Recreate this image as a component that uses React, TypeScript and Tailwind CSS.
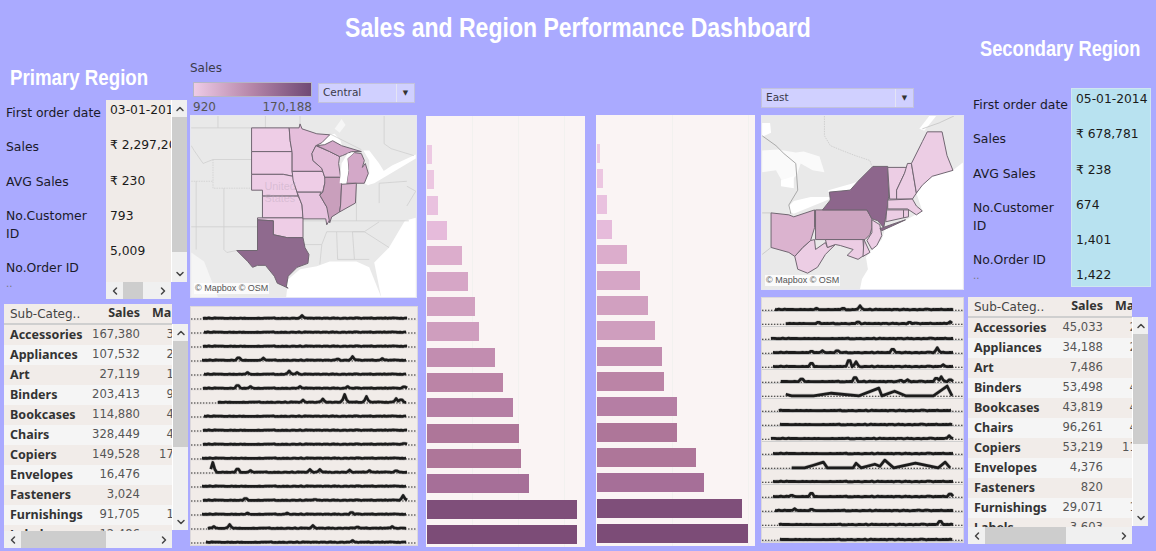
import { ChevronDown, ChevronLeft, ChevronRight, ChevronUp } from "lucide-react";

type SparkRow = { from: number; to: number; peaks?: number[][]; line?: number[][] };
type Row = { name: string; sales: string; margin: string };

const BAR_COLORS = ["#edc9e3", "#ecc6e1", "#e9c1df", "#e6bbdb", "#dcadcc", "#d6a6c6", "#d1a0c0", "#cf9ebe", "#c28db0", "#bb84a6", "#b57ea4", "#ae7699", "#ae7699", "#a66f98", "#7f4f7a", "#7c4c77"];
const BARS_CENTRAL = [5, 7, 11, 20, 35, 41, 48, 52, 68, 76, 86, 92, 94, 102, 150, 150];
const BARS_EAST = [3, 6, 10, 15, 30, 43, 51, 58, 65, 67, 80, 80, 99, 107, 145, 151];

const CENTRAL_ROWS: Row[] = [
  { name: "Accessories", sales: "167,380", margin: "36,154" },
  { name: "Appliances", sales: "107,532", margin: "22,105" },
  { name: "Art", sales: "27,119", margin: "13,206" },
  { name: "Binders", sales: "203,413", margin: "91,290" },
  { name: "Bookcases", sales: "114,880", margin: "42,100" },
  { name: "Chairs", sales: "328,449", margin: "46,120" },
  { name: "Copiers", sales: "149,528", margin: "171,560" },
  { name: "Envelopes", sales: "16,476", margin: "6,964" },
  { name: "Fasteners", sales: "3,024", margin: "949" },
  { name: "Furnishings", sales: "91,705", margin: "13,059" },
  { name: "Labels", sales: "12,486", margin: "5,546" },
];

const EAST_ROWS: Row[] = [
  { name: "Accessories", sales: "45,033", margin: "21,520" },
  { name: "Appliances", sales: "34,188", margin: "28,104" },
  { name: "Art", sales: "7,486", margin: "1,059" },
  { name: "Binders", sales: "53,498", margin: "41,220" },
  { name: "Bookcases", sales: "43,819", margin: "41,330" },
  { name: "Chairs", sales: "96,261", margin: "42,610" },
  { name: "Copiers", sales: "53,219", margin: "113,400" },
  { name: "Envelopes", sales: "4,376", margin: "1,812" },
  { name: "Fasteners", sales: "820", margin: "263" },
  { name: "Furnishings", sales: "29,071", margin: "15,069" },
  { name: "Labels", sales: "3,603", margin: "1,129" },
];

const SPARK_CENTRAL: SparkRow[] = [
  { from: 12, to: 218, peaks: [[112, 3]] },
  { from: 13, to: 218 },
  { from: 12, to: 218 },
  { from: 11, to: 218, peaks: [[48, 4], [73, 2.5], [148, 2], [163, 4], [193, 2]] },
  { from: 13, to: 218, peaks: [[57, 2], [99, 3.5], [107, 2]] },
  { from: 12, to: 218, peaks: [[47, 4.5], [60, 2], [110, 2], [158, 2], [215, 2.5]] },
  { from: 27, to: 218, peaks: [[113, 2.5], [133, 3.5], [155, 8], [177, 6], [207, 4], [212, 4]] },
  { from: 13, to: 217 },
  { from: 12, to: 218 },
  { from: 12, to: 218, peaks: [[215, 1.5]] },
  { from: 11, to: 218 },
  { from: 20, to: 218, peaks: [[22, 10], [47, 5], [60, 2], [120, 3], [130, 3], [160, 2.5], [180, 2], [207, 2.5]] },
  { from: 11, to: 218 },
  { from: 12, to: 218, peaks: [[55, 3], [125, 1.5], [214, 5]] },
  { from: 11, to: 218, peaks: [[57, 1.5], [97, 1.5], [162, 3]] },
  { from: 17, to: 218, peaks: [[23, 2], [39, 4], [123, 3], [168, 2], [203, 2]] },
  { from: 15, to: 218, peaks: [[163, 2]] },
];

const SPARK_EAST: SparkRow[] = [
  { from: 13, to: 193, peaks: [[55, 1.5], [82, 2], [99, 4]] },
  { from: 24, to: 193, peaks: [[57, 2], [97, 2.5], [149, 2], [190, 2]] },
  { from: 9, to: 193 },
  { from: 11, to: 193, peaks: [[50, 2], [61, 2], [76, 3], [132, 5], [177, 5]] },
  { from: 11, to: 193, peaks: [[50, 5], [88, 9], [95, 5], [183, 2]] },
  { from: 19, to: 193, peaks: [[40, 4], [94, 6], [140, 2], [147, 2], [176, 5], [181, 5], [190, 3]] },
  { from: 24, to: 192, line: [[24, 9], [30, 10.5], [52, 10.5], [70, 8], [98, 10.5], [118, 3], [121, 10.5], [134, 6], [145, 10.5], [173, 10.5], [187, 1], [192, 10.5]] },
  { from: 17, to: 192 },
  { from: 18, to: 193 },
  { from: 9, to: 193, peaks: [[189, 3]] },
  { from: 11, to: 193 },
  { from: 30, to: 188, line: [[30, 10.5], [43, 10.5], [52, 8], [62, 5], [66, 10.5], [92, 10.5], [95, 6], [100, 10.5], [114, 7], [119, 9], [124, 3], [133, 10.5], [155, 6], [178, 10.5], [185, 5], [190, 10.5]] },
  { from: 11, to: 193 },
  { from: 11, to: 193, peaks: [[30, 2], [50, 5], [190, 4]] },
  { from: 13, to: 193, peaks: [[33, 2], [50, 2], [158, 1]] },
  { from: 17, to: 193, peaks: [[180, 5]] },
  { from: 18, to: 193 },
];

// same wobble on every render
function wobble(i: number) {
  const v = Math.sin(i * 12.9898) * 43758.5453;
  return v - Math.floor(v);
}

function sparkPath(row: SparkRow, base: number) {
  if (row.line) return row.line.map((p, i) => `${i ? "L" : "M"}${p[0]} ${p[1]}`).join(" ");
  const pts: string[] = [];
  for (let x = row.from; x <= row.to; x += 2) {
    let lift = wobble(x + row.from) * 0.6;
    for (const [px, h] of row.peaks ?? []) {
      const d = Math.abs(x - px);
      if (d < 3) lift = Math.max(lift, h * (1 - d / 3));
    }
    pts.push(`${pts.length ? "L" : "M"}${x} ${(base - lift).toFixed(1)}`);
  }
  return pts.join(" ");
}

function Sparklines({ rows, width, lineClass }: { rows: SparkRow[]; width: number; lineClass: string }) {
  return (
    <div className="flex-1 flex flex-col bg-[#f1ece9] border border-[#dcd8dc] overflow-hidden">
      {rows.map((row, i) => (
        <div key={i} className={`flex-1 min-h-0 border-b ${lineClass}`}>
          <svg viewBox={`0 0 ${width} 13`} preserveAspectRatio="none" className="w-full h-full block overflow-visible">
            <line x1="0" y1="12" x2={width} y2="12" stroke="#222" strokeWidth="1" strokeDasharray="1.5 1.5" />
            <g transform="translate(0 1)">
              <path d={sparkPath(row, 10.5)} fill="none" stroke="#8a8a8a" strokeWidth="3.8" strokeOpacity="0.45" strokeLinejoin="round" />
              <path d={sparkPath(row, 10.5)} fill="none" stroke="#1c1c1c" strokeWidth="2.7" strokeLinejoin="round" />
            </g>
          </svg>
        </div>
      ))}
    </div>
  );
}

function Bars({ values, grid }: { values: number[]; grid: number[] }) {
  return (
    <div className="relative h-[431px] bg-[#faf4f4] pl-px pt-[29px] flex flex-col gap-[6.33px]">
      {grid.map((g) => (
        <div key={g} className="absolute top-0 bottom-0 w-px bg-[#f2f1ef]" style={{ left: g }} />
      ))}
      {values.map((v, i) => (
        <div key={i} className="relative h-[19px] shrink-0" style={{ width: v, background: BAR_COLORS[i] }} />
      ))}
    </div>
  );
}

function VScroll({ thumbTop, thumbHeight }: { thumbTop: number; thumbHeight: number }) {
  return (
    <div className="w-[16px] h-full flex flex-col bg-[#f0f0f0] border-l border-white text-[#444]">
      <div className="h-[17px] flex items-center justify-center shrink-0">
        <ChevronUp size={12} strokeWidth={3} />
      </div>
      <div className="flex-1 min-h-0">
        <div className="bg-[#cdcdcd]" style={{ marginTop: thumbTop, height: thumbHeight }} />
      </div>
      <div className="h-[17px] flex items-center justify-center shrink-0">
        <ChevronDown size={12} strokeWidth={3} />
      </div>
    </div>
  );
}

function HScroll({ thumbLeft, thumbWidth }: { thumbLeft: number; thumbWidth: number }) {
  return (
    <div className="h-[17px] flex bg-[#f0f0f0] text-[#444]">
      <div className="w-[17px] flex items-center justify-center shrink-0">
        <ChevronLeft size={12} strokeWidth={3} />
      </div>
      <div className="flex-1 min-w-0">
        <div className="h-full bg-[#cdcdcd]" style={{ marginLeft: thumbLeft, width: thumbWidth }} />
      </div>
      <div className="w-[17px] flex items-center justify-center shrink-0">
        <ChevronRight size={12} strokeWidth={3} />
      </div>
    </div>
  );
}

function Dropdown({ label, width }: { label: string; width: number }) {
  return (
    <div className="h-[20px] flex items-center bg-[#d0d0ff] border border-[#c2c2dc] text-[10.5px] text-[#3a3a4a]" style={{ width }}>
      <div className="flex-1 pl-[4px]">{label}</div>
      <div className="w-[18px] h-full border-l border-[#e4e4f4] flex items-center justify-center text-[7px] text-[#333]">▼</div>
    </div>
  );
}

function Labels({ paddingTop }: { paddingTop: number }) {
  return (
    <div className="text-[12.4px] leading-[18px] text-[#1a1a2a]" style={{ paddingTop }}>
      <div className="h-[34px] whitespace-nowrap">First order date</div>
      <div className="h-[35px]">Sales</div>
      <div className="h-[34px]">AVG Sales</div>
      <div className="h-[52px]">
        No.Customer
        <br />
        ID
      </div>
      <div className="h-[18px]">No.Order ID</div>
      <div className="text-[#777] text-[10px] leading-[14px]">..</div>
    </div>
  );
}

function Values({ values }: { values: string[] }) {
  return (
    <div className="pl-[4px] pt-[1px] text-[12.3px] leading-[18px] text-[#1a1a1a] whitespace-nowrap">
      {values.map((v) => (
        <div key={v} className="h-[35.3px]">{v}</div>
      ))}
    </div>
  );
}

function SubCategoryTable({ rows, nameGap, salesEdge, width, bodyHeight }: { rows: Row[]; nameGap: number; salesEdge: number; width: number; bodyHeight: number }) {
  const bold = "font-['Noto_Sans',sans-serif] font-bold text-[12.5px] text-[#333]";
  return (
    <div className="overflow-hidden" style={{ width }}>
      <div className="h-[21px] flex items-center bg-[#f1ece9] border-b-2 border-[#cfcfcf] whitespace-nowrap">
        <div className="text-[#444] shrink-0" style={{ paddingLeft: nameGap, width: salesEdge - 46 }}>Sub-Categ..</div>
        <div className={`w-[46px] shrink-0 text-right ${bold}`}>Sales</div>
        <div className={`pl-[12px] shrink-0 ${bold}`}>Ma</div>
      </div>
      <div className="overflow-hidden" style={{ height: bodyHeight }}>
        {rows.map((r, i) => (
          <div key={r.name} className={`h-[20px] flex items-center whitespace-nowrap text-[11.6px] ${i % 2 === 0 ? "bg-[#f1ece9]" : "bg-[#f5f5f5]"}`}>
            <div className={`shrink-0 ${bold}`} style={{ paddingLeft: nameGap, width: salesEdge - 52 }}>{r.name}</div>
            <div className="w-[52px] shrink-0 text-right text-[#555]">{r.sales}</div>
            <div className="w-[67px] shrink-0 text-right text-[#555]">{r.margin}</div>
          </div>
        ))}
      </div>
    </div>
  );
}

function Shape({ d, fill }: { d: string; fill: string }) {
  return <polygon points={d} fill={fill} stroke="#6f6570" strokeWidth="1" strokeLinejoin="round" />;
}

function Attribution() {
  return (
    <div className="absolute left-[3px] bottom-[3px] px-[1px] bg-white/80 text-[9px] leading-[11px] text-[#555] font-['Liberation_Sans',sans-serif]">
      © Mapbox © OSM
    </div>
  );
}

function CentralMap() {
  const thin = "#cfcfcf";
  return (
    <div className="relative h-[183px] w-[227px] border border-[#e6e6f2]">
      <svg viewBox="190 115 227 183" className="w-full h-full block bg-[#e9e9e9]">
        <polygon points="417,218 406,221 390,248 375,263 382,298 417,298" fill="#fff" />
        <polygon points="382,298 370,268 357,262 330,262 317,267 300,270 288,280 286,298" fill="#fff" />
        <polygon points="190,253 203,262 210,280 217,298 190,298" fill="#f5f5f5" />
        <polygon points="335,128 342,118 346,124 340,132" fill="#f6f6f6" />
        <polygon points="317,144 322,140 330,134 335,133 341,140 342,144 333,140 325,144" fill="#fff" />
        <polygon points="364,150 370,160 370,173 365,183 369,185 375,180 385,171 380,163 370,150" fill="#fff" />
        <polygon points="368,185 375,183 395,171 417,158 417,154 393,165 378,175" fill="#fff" />
        <g fill="none" stroke={thin} strokeWidth="0.8">
          <path d="M190 127H251M217 115V127M265 115V127M300 115V125M330 133L362 149" />
          <path d="M190 145L193 150L202 163L212 159H251" />
          <path d="M212 159V188H251M190 181H212" strokeDasharray="1.5 1" />
          <path d="M195 181V250M223 188V227L223 250L226 253L236 251M190 227H257" />
          <path d="M303 221H410M305 245H322L320 265M322 245L327 232L337 232L338 260L355 260L353 232L365 232L390 248M337 232H365M370 260H355M365 232L380 222" />
          <path d="M385 115V143L392 148L415 155M357 185V221M380 183V203M380 183L408 181M408 186L417 191L408 206" />
        </g>
        <Shape fill="#eecde6" d="251,127 289,127 290,140 292,151 251,151" />
        <Shape fill="#eecde6" d="251,151 292,151 292,171 293,176 283,174 251,174" />
        <Shape fill="#eecde6" d="251,174 283,174 293,176 294,183 297,192 298,196 262,196 262,190 251,190" />
        <Shape fill="#eecde6" d="262,196 298,196 300,200 302,205 303,218 262,218" />
        <Shape fill="#eecde6" d="257,218 303,218 303,238 297,238 287,238 273,235 273,221 257,220" />
        <Shape fill="#8f6a8e" d="257,220 273,221 273,235 287,238 303,238 305,248 309,255 308,264 297,268 288,277 286,288 288,289 277,284 274,277 265,266 257,266 252,268 247,262 236,251 257,251" />
        <Shape fill="#e5bedb" d="289,127 299,127 300,123 302,128 317,133 330,134 322,142 316,145 312,153 313,160 322,168 323,171 292,171 292,152 290,140" />
        <Shape fill="#eecde6" d="292,171 323,171 326,180 325,183 323,192 297,192 293,180" />
        <Shape fill="#e8c4e0" d="297,192 321,192 320,195 327,207 332,217 330,220 327,225 326,219 303,219 302,205" />
        <Shape fill="#e2bcd8" d="316,145 330,151 340,156 339,163 341,177 325,177 322,168 313,160 312,153" />
        <Shape fill="#d3a8c8" d="317,145 325,144 333,140 342,145 362,151 352,151 343,155 340,156 330,151" />
        <Shape fill="#d3a8c8" d="355,152 362,153 365,160 363,167 366,163 369,173 365,183 347,183 349,170 348,158" />
        <Shape fill="#c99fbc" d="325,177 341,177 342,185 341,205 340,212 332,217 330,223 327,207 320,195 323,192 325,183" />
        <Shape fill="#dcb4d0" d="342,184 357,183 356,203 340,212 341,205" />
        <polygon points="340,183 342,163 348,153 355,152 348,158 349,170 347,183" fill="#fff" />
        <text x="264" y="190" fontSize="11" fill="#bda8bd" fillOpacity="0.45" fontFamily="Liberation Sans">United</text>
        <text x="264" y="202" fontSize="11" fill="#bda8bd" fillOpacity="0.45" fontFamily="Liberation Sans">States</text>
      </svg>
      <Attribution />
    </div>
  );
}

function EastMap() {
  return (
    <div className="relative h-[175px] w-[203px] border border-[#e6e6f2]">
      <svg viewBox="761 115 203 175" className="w-full h-full block bg-[#e9e9e9]">
        <polygon points="964,162 954,170 933,176 923,185 917,193 923,211 905,221 885,230 882,240 872,250 866,258 868,270 862,280 860,290 964,290" fill="#fff" />
        <polygon points="920,128 930,115 937,115 925,130" fill="#fff" />
        <polygon points="761,122 769,122 770,132 761,136" fill="#fff" />
        <polygon points="761,150 777,149 795,152 803,151 819,156 824,172 812,170 800,163 796,175 784,186 775,170 761,172" fill="#fafafa" />
        <polygon points="780,180 793,176 793,188 780,186" fill="#fff" />
        <polygon points="788,206 793,201 810,197 830,197 832,198 793,214 788,211" fill="#fff" />
        <polygon points="828,190 853,183 858,181 855,188 840,191 828,192" fill="#fff" />
        <g fill="none">
          <path d="M761 135L775 145L783 153L795 163L797 190L788 205L790 214" stroke="#a8a8a8" strokeWidth="1" />
          <path d="M824 115V135L830 145L842 150L855 155L870 160L872 166" stroke="#c8c8c8" strokeWidth="0.8" strokeDasharray="1.5 1" />
          <path d="M761 213H770M761 255L770 248M923 128L940 122L955 115" stroke="#c4c4c4" strokeWidth="0.8" />
        </g>
        <Shape fill="#eccde4" d="794,257 802,248 810,241 814,240 815,250 825,243 827,248 835,245 825,255 817,268 807,274 797,270" />
        <Shape fill="#dbb3cf" d="770,213 788,215 793,217 814,210 814,228 810,241 802,248 794,257 788,253 770,248" />
        <Shape fill="#cba3bf" d="815,210 867,210 872,219 872,228 870,235 865,240 815,240" />
        <Shape fill="#eccde4" d="825,240 863,240 864,256 858,260 847,256 853,250 840,246 835,245 827,248" />
        <Shape fill="#eccde4" d="864,240 870,253 863,257" />
        <Shape fill="#eccde4" d="872,220 880,225 882,236 877,246 872,250 867,241 872,233" />
        <Shape fill="#8d668c" d="873,166 888,166 889,196 887,211 884,228 878,221 872,219 867,210 822,210 830,200 829,192 850,190 858,181" />
        <Shape fill="#8d668c" d="880,229 897,223 906,220 893,226 882,231" />
        <Shape fill="#eccde4" d="888,167 908,167 905,173 897,190 897,199 890,199" />
        <Shape fill="#eccde4" d="908,163 912,163 917,193 913,199 897,199 897,190 905,173" />
        <Shape fill="#eccde4" d="912,163 923,141 928,131 943,131 948,155 954,170 933,176 923,185 917,193" />
        <Shape fill="#eccde4" d="888,200 913,199 917,206 923,211 917,215 908,209 888,209" />
        <Shape fill="#eccde4" d="887,210 904,210 904,218 886,222" />
        <Shape fill="#eccde4" d="904,210 909,210 909,217 904,218" />
      </svg>
      <Attribution />
    </div>
  );
}

export default function App() {
  const titleFont = "font-['Liberation_Sans',sans-serif] font-bold text-white whitespace-nowrap";
  return (
    <div className="w-[1156px] h-[551px] overflow-hidden bg-[#aaaaff] font-['DejaVu_Sans',sans-serif] text-[12px]">
      <div className={`h-[38px] pt-[9px] text-center text-[27px] leading-[38px] scale-x-[.853] ${titleFont}`}>
        Sales and Region Performance Dashboard
      </div>

      <div className="flex">
        {/* Primary region */}
        <div className="w-[190px] shrink-0 pt-[28px]">
          <div className={`h-[24px] ml-[10px] text-[22px] leading-[24px] origin-left scale-x-[.85] ${titleFont}`}>Primary Region</div>
          <div className="mt-[10px] h-[199px] flex">
            <div className="w-[106px] pl-[6px] shrink-0">
              <Labels paddingTop={4} />
            </div>
            <div className="w-[65px] shrink-0 flex flex-col">
              <div className="flex-1 min-h-0 bg-[#f0ebe8] overflow-hidden">
                <Values values={["03-01-2014", "₹ 2,297,201", "₹ 230", "793", "5,009"]} />
              </div>
              <HScroll thumbLeft={0} thumbWidth={20} />
            </div>
            <div className="h-[182px]">
              <VScroll thumbTop={0} thumbHeight={135} />
            </div>
          </div>
          <div className="mt-[5px] pl-[4px] flex">
            <div className="w-[168px] shrink-0">
              <SubCategoryTable rows={CENTRAL_ROWS} nameGap={6} salesEdge={136} width={168} bodyHeight={206} />
              <HScroll thumbLeft={0} thumbWidth={85} />
            </div>
            <div className="mt-[20px] h-[206px]">
              <VScroll thumbTop={0} thumbHeight={106} />
            </div>
          </div>
        </div>

        {/* Central map and sparklines */}
        <div className="w-[228px] shrink-0 pt-[22px] flex flex-col h-[508px]">
          <div className="text-[#3a3a4a] h-[20px] leading-[16px]">Sales</div>
          <div className="h-[35px] flex">
            <div className="w-[128px] pl-[3px] shrink-0">
              <div className="h-[15px] w-[119px] mt-[2px] border border-[#b5b5c5] bg-gradient-to-r from-[#eecbe6] via-[#b585a8] to-[#704a75]" />
              <div className="flex justify-between w-[119px] text-[#555] leading-[18px] mt-[1px]">
                <span>920</span>
                <span>170,188</span>
              </div>
            </div>
            <div className="mt-[3px]">
              <Dropdown label="Central" width={97} />
            </div>
          </div>
          <CentralMap />
          <div className="mt-[8px] flex-1 min-h-0 flex w-[228px]">
            <Sparklines rows={SPARK_CENTRAL} width={228} lineClass="border-[#ebe6e4]" />
          </div>
        </div>

        {/* Sub-category bars */}
        <div className="ml-[8px] w-[159px] shrink-0 pt-[78px]">
          <Bars values={BARS_CENTRAL} grid={[46, 92, 138]} />
        </div>
        <div className="ml-[11px] w-[159px] shrink-0 pt-[77px]">
          <Bars values={BARS_EAST} grid={[76, 152]} />
        </div>

        {/* East map and sparklines */}
        <div className="ml-[6px] w-[203px] shrink-0 pt-[50px] flex flex-col h-[505px]">
          <Dropdown label="East" width={153} />
          <div className="mt-[7px]">
            <EastMap />
          </div>
          <div className="mt-[7px] flex-1 min-h-0 flex">
            <Sparklines rows={SPARK_EAST} width={203} lineClass="border-[#cfcfcf]" />
          </div>
        </div>

        {/* Secondary region */}
        <div className="ml-[4px] w-[188px] shrink-0">
          <div className={`h-[22px] ml-[12px] text-[22px] leading-[22px] origin-left scale-x-[.83] ${titleFont}`}>Secondary Region</div>
          <div className="mt-[28px] h-[199px] flex">
            <div className="w-[103px] pl-[5px] shrink-0">
              <Labels paddingTop={8} />
            </div>
            <div className="w-[80px] shrink-0 bg-[#b8e2f0] border border-[#cfe6ef] overflow-hidden">
              <Values values={["05-01-2014", "₹ 678,781", "₹ 238", "674", "1,401", "1,422"]} />
            </div>
          </div>
          <div className="mt-[10px] flex">
            <div className="w-[164px] shrink-0">
              <SubCategoryTable rows={EAST_ROWS} nameGap={6} salesEdge={135} width={164} bodyHeight={209} />
              <HScroll thumbLeft={0} thumbWidth={81} />
            </div>
            <div className="mt-[20px] h-[209px]">
              <VScroll thumbTop={0} thumbHeight={110} />
            </div>
          </div>
        </div>
      </div>
    </div>
  );
}
